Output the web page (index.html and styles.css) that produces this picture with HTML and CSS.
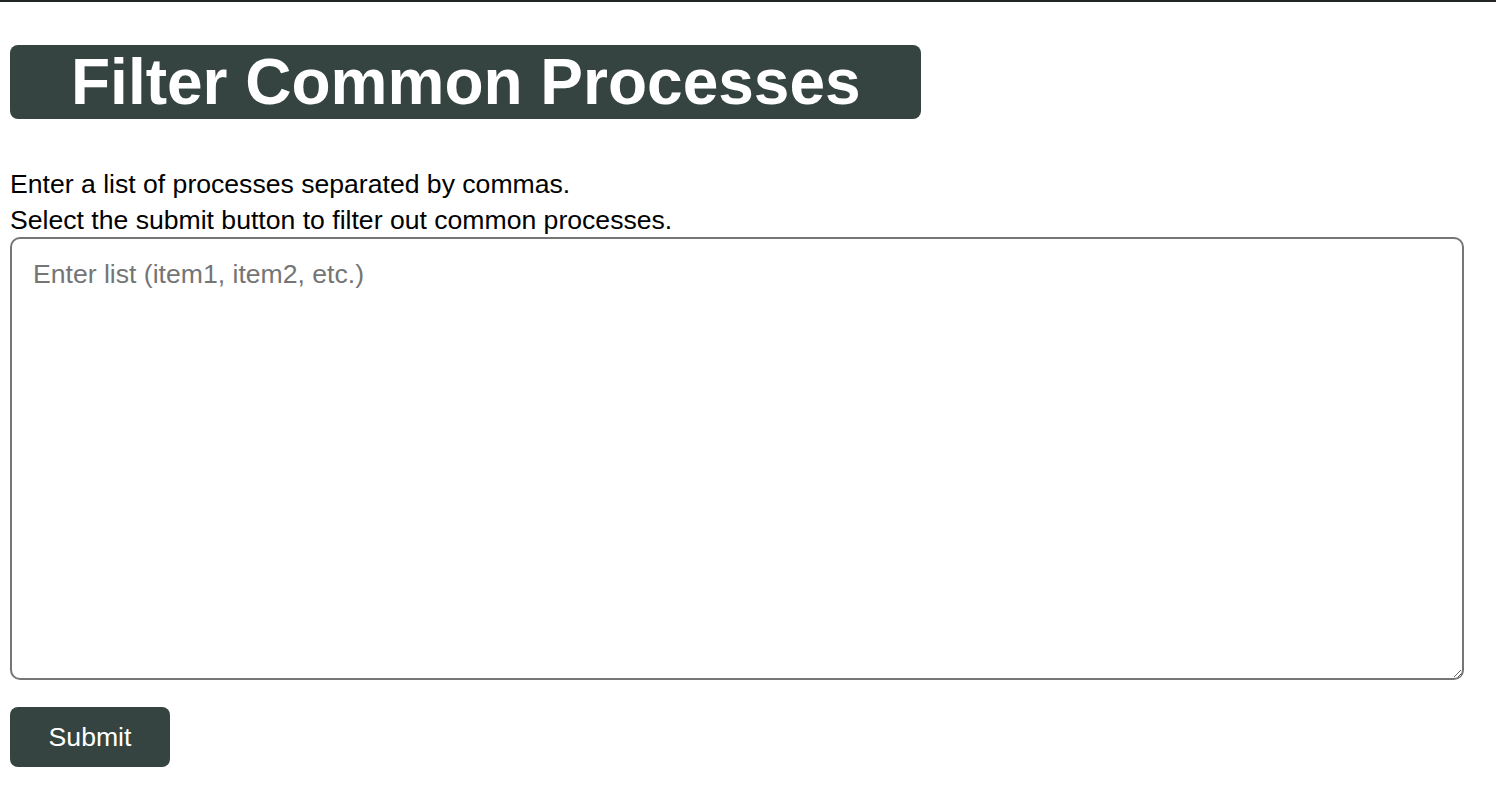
FILE: index.html
```html
<!DOCTYPE html>
<html lang="en">
<head>
<meta charset="utf-8">
<title>Filter Common Processes</title>
<link rel="stylesheet" href="styles.css">
</head>
<body>
<main class="page">
  <h1 class="title">Filter Common Processes</h1>
  <p class="intro">Enter a list of processes separated by commas.<br>Select the submit button to filter out common processes.</p>
  <textarea class="list-input" placeholder="Enter list (item1, item2, etc.)"></textarea>
  <button class="submit" type="button">Submit</button>
</main>
</body>
</html>
```
FILE: styles.css
```css
html, body {
  margin: 0;
  padding: 0;
  background: #ffffff;
}

body {
  border-top: 2px solid #222526;
  font-family: "Liberation Sans", Arial, Helvetica, sans-serif;
  color: #000000;
}

.page {
  display: flex;
  flex-direction: column;
  align-items: flex-start;
  padding: 0 32px 0 10px;
}

.title {
  margin: 43px 0 0 0;
  padding: 0 60px 0 61px;
  background: #354441;
  color: #ffffff;
  font-size: 64px;
  font-weight: 700;
  line-height: 74px;
  border-radius: 8px;
  white-space: nowrap;
}

.intro {
  margin: 47px 0 0 0;
  font-size: 26.6px;
  line-height: 36px;
}

.list-input {
  display: block;
  box-sizing: border-box;
  width: 100%;
  height: 443px;
  margin: -1px 0 0 0;
  padding: 20px 21px;
  border: 2px solid #767676;
  border-radius: 10px;
  font-family: "Liberation Sans", Arial, Helvetica, sans-serif;
  font-size: 26.6px;
  color: #000000;
  background: #ffffff;
  resize: both;
  outline: none;
}

.list-input::placeholder {
  color: #757575;
}

.submit {
  margin-top: 27px;
  width: 160px;
  height: 60px;
  border: none;
  border-radius: 8px;
  background: #354441;
  color: #ffffff;
  font-family: "Liberation Sans", Arial, Helvetica, sans-serif;
  font-size: 26.6px;
  cursor: pointer;
}
```
